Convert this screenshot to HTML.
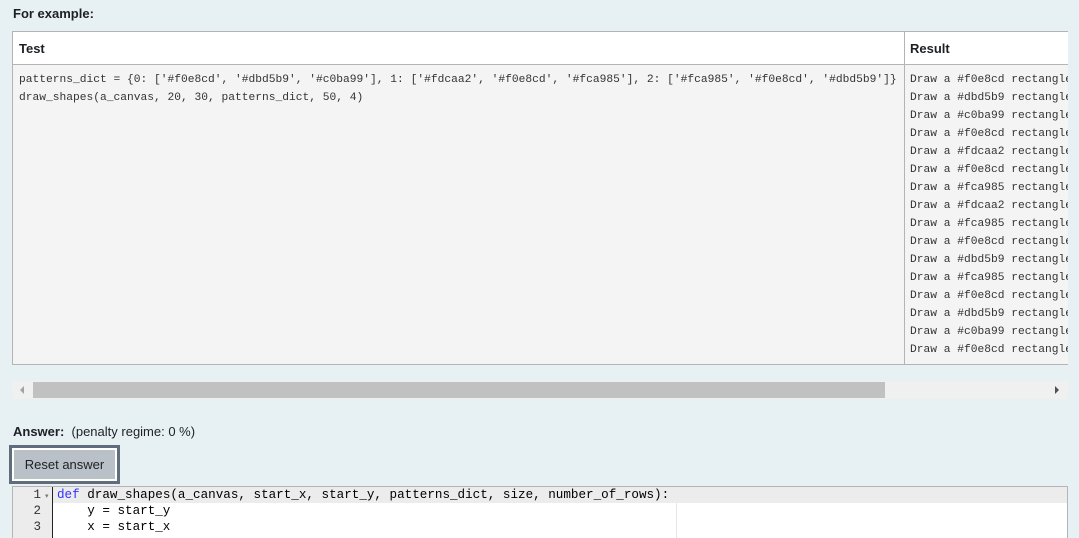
<!DOCTYPE html>
<html style="overflow:hidden;height:538px"><head><meta charset="utf-8"><style>
body{margin:0;width:1079px;height:538px;background:#e7f0f3;font-family:"Liberation Sans",sans-serif;overflow:hidden;position:relative;color:#1d2125}
.abs{position:absolute}
.mono{font-family:"Liberation Mono",monospace}
.lbl{font-weight:bold;font-size:13px}
</style></head><body>
<div class="abs lbl" style="left:13px;top:6px">For example:</div>
<div class="abs" style="left:12px;top:31px;width:1056px;height:335px;overflow:hidden">
  <div class="abs" style="left:0;top:0;width:1100px;height:332px;border:1px solid #b4b4b4;border-right:none;background:#f4f4f4"></div>
  <div class="abs" style="left:1px;top:1px;width:1100px;height:32px;background:#fff;border-bottom:1px solid #b4b4b4"></div>
  <div class="abs" style="left:892px;top:1px;width:1px;height:333px;background:#b4b4b4"></div>
  <div class="abs lbl" style="left:7px;top:10px">Test</div>
  <div class="abs lbl" style="left:898px;top:10px">Result</div>
  <div class="abs mono" style="left:7px;top:40px;font-size:11.25px;line-height:18px;white-space:pre;color:#333">patterns_dict = {0: ['#f0e8cd', '#dbd5b9', '#c0ba99'], 1: ['#fdcaa2', '#f0e8cd', '#fca985'], 2: ['#fca985', '#f0e8cd', '#dbd5b9']}
draw_shapes(a_canvas, 20, 30, patterns_dict, 50, 4)</div>
  <div class="abs mono" style="left:898px;top:40px;font-size:11.25px;line-height:18px;white-space:pre;color:#333">Draw a #f0e8cd rectangle
Draw a #dbd5b9 rectangle
Draw a #c0ba99 rectangle
Draw a #f0e8cd rectangle
Draw a #fdcaa2 rectangle
Draw a #f0e8cd rectangle
Draw a #fca985 rectangle
Draw a #fdcaa2 rectangle
Draw a #fca985 rectangle
Draw a #f0e8cd rectangle
Draw a #dbd5b9 rectangle
Draw a #fca985 rectangle
Draw a #f0e8cd rectangle
Draw a #dbd5b9 rectangle
Draw a #c0ba99 rectangle
Draw a #f0e8cd rectangle</div>
</div>
<div class="abs" style="left:12px;top:381px;width:1056px;height:18px;background:#f0f0f0"></div>
<div class="abs" style="left:33px;top:382px;width:852px;height:16px;background:#c1c1c1"></div>
<div class="abs" style="left:20px;top:386px;width:0;height:0;border-top:4px solid transparent;border-bottom:4px solid transparent;border-right:4px solid #a3a3a3"></div>
<div class="abs" style="left:1055px;top:386px;width:0;height:0;border-top:4px solid transparent;border-bottom:4px solid transparent;border-left:4px solid #505050"></div>
<div class="abs" style="left:13px;top:424px;font-size:13px"><b>Answer:</b>&nbsp; (penalty regime: 0 %)</div>
<div class="abs" style="left:9px;top:445px;width:111px;height:39px;background:#5f6d7c"></div>
<div class="abs" style="left:12px;top:448px;width:105px;height:33px;background:#fff"></div>
<div class="abs" style="left:14px;top:450px;width:101px;height:29px;background:#b9c0c8;font-size:13px;line-height:29px;text-align:center;color:#1d2125">Reset answer</div>
<div class="abs" style="left:12px;top:486px;width:1054px;height:52px;border:1px solid #b4b4b4;border-bottom:none;background:#fff"></div>
<div class="abs" style="left:13px;top:487px;width:40px;height:51px;background:#ececec"></div>
<div class="abs" style="left:13px;top:487px;width:1054px;height:16px;background:#ececec"></div>
<div class="abs" style="left:52px;top:487px;width:1px;height:51px;background:#222"></div>
<div class="abs" style="left:676px;top:503px;width:1px;height:35px;background:#e6e6e6"></div>
<div class="abs mono" style="left:13px;top:487px;width:28px;text-align:right;font-size:12.5px;line-height:16px;white-space:pre;color:#333">1
2
3</div>
<div class="abs" style="left:45px;top:492px;font-size:7px;color:#777">▾</div>
<div class="abs mono" style="left:57px;top:487px;font-size:12.6px;line-height:16px;white-space:pre;color:#000"><span style="color:#3232ff">def</span> draw_shapes(a_canvas, start_x, start_y, patterns_dict, size, number_of_rows):
    y = start_y
    x = start_x</div>
</body></html>
